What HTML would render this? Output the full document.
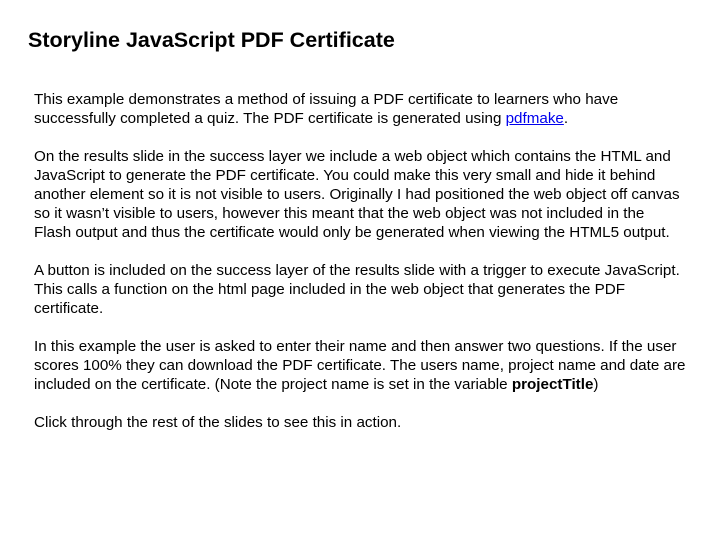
<!DOCTYPE html>
<html><head><meta charset="utf-8"><style>
body{margin:0;width:720px;height:540px;background:#fff;font-family:"Liberation Sans",Arial,sans-serif;color:#000;overflow:hidden}
h1{position:absolute;left:28px;top:26px;margin:0;font-size:21.5px;font-weight:bold;line-height:28px;white-space:nowrap}
.t{position:absolute;left:34px;top:90px;font-size:15.2px;line-height:19px;white-space:nowrap}
p{margin:0 0 19px 0}
a{color:#0000ee;text-decoration:underline}
</style></head><body>
<h1>Storyline JavaScript PDF Certificate</h1>
<div class="t">
<p>This example demonstrates a method of issuing a PDF certificate to learners who have<br>successfully completed a quiz. The PDF certificate is generated using <a>pdfmake</a>.</p>
<p>On the results slide in the success layer we include a web object which contains the HTML and<br>JavaScript to generate the PDF certificate. You could make this very small and hide it behind<br>another element so it is not visible to users. Originally I had positioned the web object off canvas<br>so it wasn’t visible to users, however this meant that the web object was not included in the<br>Flash output and thus the certificate would only be generated when viewing the HTML5 output.</p>
<p>A button is included on the success layer of the results slide with a trigger to execute JavaScript.<br>This calls a function on the html page included in the web object that generates the PDF<br>certificate.</p>
<p>In this example the user is asked to enter their name and then answer two questions. If the user<br>scores 100% they can download the PDF certificate. The users name, project name and date are<br>included on the certificate. (Note the project name is set in the variable <b>projectTitle</b>)</p>
<p>Click through the rest of the slides to see this in action.</p>
</div>
</body></html>
